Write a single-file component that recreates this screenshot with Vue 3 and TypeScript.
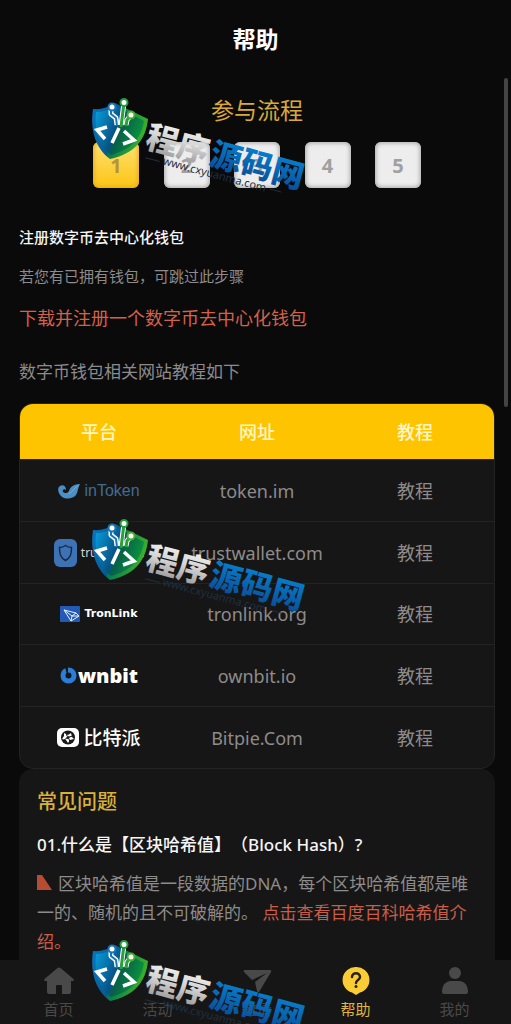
<script setup lang="ts">
import { ref } from 'vue'

interface Wallet {
  id: string
  brand: string
  site: string
}

const steps = [1, 2, 3, 4, 5]
const activeStep = ref(1)

const wallets: Wallet[] = [
  { id: 'intoken', brand: 'inToken', site: 'token.im' },
  { id: 'trust', brand: 'trust wallet', site: 'trustwallet.com' },
  { id: 'tron', brand: 'TronLink', site: 'tronlink.org' },
  { id: 'ownbit', brand: 'wnbit', site: 'ownbit.io' },
  { id: 'bitpie', brand: '比特派', site: 'Bitpie.Com' },
]

const tabs = [
  { id: 'home', label: '首页' },
  { id: 'activity', label: '活动' },
  { id: 'invite', label: '邀请' },
  { id: 'help', label: '帮助' },
  { id: 'mine', label: '我的' },
]
const activeTab = ref('help')

const marks = ['top', 'middle', 'bottom']
</script>

<template>
  <div class="page">
    <header class="header">
      <h1>帮助</h1>
    </header>

    <main class="content">
      <h2 class="flow-title">参与流程</h2>
      <div class="steps">
        <button
          v-for="n in steps"
          :key="n"
          type="button"
          class="step"
          :class="{ active: n === activeStep }"
          @click="activeStep = n"
        >{{ n }}</button>
      </div>

      <section class="intro">
        <h3>注册数字币去中心化钱包</h3>
        <p class="hint">若您有已拥有钱包，可跳过此步骤</p>
        <a class="download" href="#wallets">下载并注册一个数字币去中心化钱包</a>
        <p class="related">数字币钱包相关网站教程如下</p>
      </section>

      <div id="wallets" class="table-box">
        <table>
          <thead>
            <tr>
              <th>平台</th>
              <th>网址</th>
              <th>教程</th>
            </tr>
          </thead>
          <tbody>
            <tr v-for="w in wallets" :key="w.id">
              <td>
                <span class="brand" :class="w.id">
                  <svg v-if="w.id === 'intoken'" width="22" height="16" viewBox="0 0 22 16" aria-hidden="true">
                    <path d="M22 1C16 1 12 4 11 8c-1 2-4 3-6 1-1-2 1-4 3-2C8 3 5 1 2 3c-3 2-2 7 1 10 4 4 12 3 15-1 2-3 2-8 4-11Z" fill="#4b8fc4" />
                    <path d="M21 2c-5 3-6 6-10 9" fill="none" stroke="#77afd6" stroke-width="1" />
                  </svg>
                  <svg v-else-if="w.id === 'trust'" width="23" height="28" viewBox="0 0 23 28" aria-hidden="true">
                    <rect width="23" height="28" rx="6" fill="#3d73b4" />
                    <path d="M11.500 6.500c2 1.500 4 2 6 2 0 7-1 10-6 13-5-3-6-6-6-13 2 0 4-.5 6-2Z" fill="none" stroke="#172a47" stroke-width="1.500" />
                  </svg>
                  <svg v-else-if="w.id === 'tron'" width="20" height="16" viewBox="0 0 20 16" aria-hidden="true">
                    <rect width="20" height="16" rx="1" fill="#2459b5" />
                    <path d="m4 4 12 3 3 3-8 5L4 4Zm0 0 8 6 7 0M16 7l-4 3-1 5" fill="none" stroke="#e8f1ff" stroke-width="1" />
                  </svg>
                  <svg v-else-if="w.id === 'ownbit'" width="17" height="17" viewBox="0 0 17 17" aria-hidden="true">
                    <circle cx="8.500" cy="8.500" r="5.500" fill="none" stroke="#2a7ed8" stroke-width="5" />
                    <path d="M5 0h3v8H7Z" fill="#171616" />
                  </svg>
                  <svg v-else width="22" height="19" viewBox="0 0 22 19" aria-hidden="true">
                    <rect width="22" height="19" rx="5" fill="#fff" />
                    <circle cx="11" cy="9.500" r="7" fill="#1a1919" />
                    <path d="m7 5 4 2 3-2 1 4 2 2-4 1-2 3-2-3-4-1 2-3Z" fill="#fff" />
                    <circle cx="11" cy="9.500" r="1.500" fill="#1a1919" />
                    <path d="m9 4 1 4M16 8l-4 1M7 12l3-2M13 14l-1-3" stroke="#1a1919" />
                  </svg>
                  <span>{{ w.brand }}</span>
                </span>
              </td>
              <td>{{ w.site }}</td>
              <td><a href="#faq">教程</a></td>
            </tr>
          </tbody>
        </table>
      </div>

      <section id="faq" class="faq">
        <h2>常见问题</h2>
        <h3>01.什么是【区块哈希值】（Block Hash）?</h3>
        <p>
          <svg class="flag" width="15" height="15" viewBox="0 0 15 15" aria-hidden="true"><path d="M0 0h5l10 15H0Z" fill="#b64d32" /></svg>区块哈希值是一段数据的DNA，每个区块哈希值都是唯一的、随机的且不可破解的。
          <a href="#baike">点击查看百度百科哈希值介绍。</a>
        </p>
      </section>
    </main>

    <div class="thumb" aria-hidden="true"></div>

    <nav class="tabs">
      <button
        v-for="t in tabs"
        :key="t.id"
        type="button"
        class="tab"
        :class="{ active: t.id === activeTab }"
        @click="activeTab = t.id"
      >
        <svg width="32" height="30" viewBox="0 0 32 30" aria-hidden="true">
          <path v-if="t.id === 'home'" d="M14.500 2q1.500-1 3 0l13 11q1 2-1 2H28v11q0 2-2 2h-7v-8q0-1-1-1h-4q-1 0-1 1v8H6q-2 0-2-2V15H2.500q-2 0-1-2Z" fill="currentColor" />
          <path v-else-if="t.id === 'activity'" d="M9 2h14q3 0 3 3v20q0 3-3 3H9q-3 0-3-3V5q0-3 3-3Z" fill="#2b2a2b" />
          <path v-else-if="t.id === 'invite'" d="M4 4h25q2 0 1 2L18 26q-1 1-2-1l-2-9L26 7 11 14 3 6q-1-2 1-2Z" fill="currentColor" />
          <g v-else-if="t.id === 'help'">
            <path d="M16 1a13 13 0 0 1 4 25.500L16 29l-4-2.500A13 13 0 0 1 16 1Z" fill="#fbcd35" />
            <path d="M12 11c0-5 8-5 8 0 0 3-4 3-4 6" fill="none" stroke="#292211" stroke-width="2.500" stroke-linecap="round" />
            <circle cx="16" cy="20.500" r="1.500" fill="#292211" />
          </g>
          <g v-else fill="currentColor">
            <circle cx="16" cy="7" r="6" />
            <path d="M12 15h8c6 0 9 5 9 11q0 2-2 2H5q-2 0-2-2c0-6 3-11 9-11Z" />
          </g>
        </svg>
        <span>{{ t.label }}</span>
      </button>
    </nav>

    <svg v-for="m in marks" :key="m" class="mark" :class="m" width="220" height="102" viewBox="0 0 220 102" aria-hidden="true">
      <defs>
        <linearGradient :id="`shield-${m}`" x1="0" y1="0" x2="1" y2="0.300">
          <stop offset="0" stop-color="#0878c4" />
          <stop offset="0.480" stop-color="#075a8d" />
          <stop offset="0.520" stop-color="#067a50" />
          <stop offset="1" stop-color="#3aae2c" />
        </linearGradient>
        <linearGradient :id="`inner-${m}`" x1="0" y1="0.200" x2="1" y2="0.600">
          <stop offset="0" stop-color="#0798d5" />
          <stop offset="0.450" stop-color="#075386" />
          <stop offset="0.550" stop-color="#076048" />
          <stop offset="1" stop-color="#0b9a3c" />
        </linearGradient>
        <linearGradient :id="`silver-${m}`" x1="0" y1="0" x2="0" y2="1">
          <stop offset="0" stop-color="#ffffff" />
          <stop offset="0.500" stop-color="#d4d4d4" />
          <stop offset="1" stop-color="#8f8f8f" />
        </linearGradient>
        <linearGradient :id="`blue-${m}`" x1="0" y1="0" x2="0" y2="1">
          <stop offset="0" stop-color="#078bdc" />
          <stop offset="1" stop-color="#09488f" />
        </linearGradient>
      </defs>
      <path d="M2 11q12 1 22-6l33 16C55 42 43 56 19 61 4 50-1 31 2 11Z" :fill="`url(#shield-${m})`" />
      <path d="M5 14q10 0 19-6l29 15C50 41 40 52 20 57 7 47 3 31 5 14Z" :fill="`url(#inner-${m})`" />
      <path d="M26 27l-1-7-5-4V9M30 27l3-22M35 27l1-5 4-5" fill="none" stroke="#fff" stroke-width="5" stroke-linejoin="round" />
      <path d="m26 28-1-8-5-4V9" fill="none" stroke="#1774b8" stroke-width="2" />
      <path d="m30 29 3-24M35 28l1-6 4-5" fill="none" stroke="#28a13b" stroke-width="3" />
      <circle cx="21" cy="9" r="3.500" fill="#fff" stroke="#1774b8" stroke-width="2" />
      <circle cx="33" cy="4.500" r="3.500" fill="#fff" stroke="#229a3f" stroke-width="2" />
      <circle cx="40" cy="17" r="3.500" fill="#fff" stroke="#45ae31" stroke-width="2" />
      <path d="M16 29 6 32l8 9M28 30l-7 15M33 33l10 9-11 4" fill="none" stroke="#fff" stroke-width="3.500" />
      <g transform="translate(53 49) rotate(15)">
        <text class="mark-name" x="0" y="0" :fill="`url(#silver-${m})`">程序</text>
        <text class="mark-name" x="66" y="0" :fill="`url(#blue-${m})`">源码网</text>
        <text class="mark-url" x="22" y="12">www.cxyuanma.com</text>
        <path d="M4 10h15M132 8h12" stroke="#1d3040" />
      </g>
    </svg>
  </div>
</template>

<style>
body {
  margin: 0;
  background: #0b0a0b;
}
</style>

<style scoped>
.page {
  position: relative;
  display: flex;
  flex-direction: column;
  height: 100vh;
  overflow: hidden;
  background: #0b0a0b;
  color: #8d8b8b;
  font-family: "Noto Sans", "Noto Sans CJK SC", sans-serif;
  text-spacing-trim: space-all;
}

h1,
h2,
h3,
p {
  margin: 0;
}

button {
  padding: 0;
  border: 0;
  font-family: inherit;
  cursor: pointer;
}

a {
  color: inherit;
  text-decoration: none;
}

.header {
  display: flex;
  flex: none;
  align-items: center;
  justify-content: center;
  height: 78px;
}

.header h1 {
  color: #fff;
  font-size: 23px;
  line-height: 32px;
}

.content {
  flex: 1;
  min-height: 0;
  padding: 16px 16px 0 19px;
  overflow-y: auto;
  scrollbar-width: none;
}

.flow-title {
  color: #d9aa35;
  font-size: 23px;
  font-weight: 400;
  line-height: 32px;
  text-align: center;
}

.steps {
  display: flex;
  justify-content: space-between;
  width: 328px;
  margin: 16px auto 0;
}

.step {
  width: 46px;
  height: 46px;
  border-radius: 6px;
  background: #ededed;
  box-shadow: inset 0 0 4px 1px #a5a5a5;
  color: #a0a0a0;
  font-size: 20px;
  font-weight: 700;
}

.step.active {
  background: linear-gradient(#ffe071, #fcc514);
  box-shadow: inset 0 0 4px 1px #e2a919;
  color: #b5943e;
}

.intro {
  display: flex;
  flex-direction: column;
  align-items: flex-start;
  margin-top: 36px;
}

.intro h3 {
  color: #f5f5f5;
  font-size: 15px;
  font-weight: 500;
  line-height: 26px;
}

.hint {
  margin-top: 13px;
  font-size: 15px;
  line-height: 26px;
}

.download {
  margin-top: 16px;
  color: #d4614a;
  font-size: 18px;
  line-height: 26px;
}

.related {
  margin-top: 28px;
  font-size: 17px;
  line-height: 26px;
}

.table-box {
  margin-top: 18px;
  overflow: hidden;
  border: 1px solid #242323;
  border-radius: 14px;
  background: #171616;
}

table {
  width: 100%;
  border-spacing: 0;
  table-layout: fixed;
  font-size: 18px;
  line-height: 26px;
  text-align: center;
}

th {
  height: 55px;
  padding: 0;
  background: #ffc400;
  color: #fff6c9;
  font-weight: 500;
}

td {
  box-sizing: border-box;
  height: 62px;
  padding: 0;
  border-top: 1px solid #242323;
}

tbody tr:nth-child(3) td {
  height: 61px;
}

.brand {
  display: flex;
  align-items: center;
  justify-content: center;
  gap: 4px;
  color: #fff;
  font-family: "Noto Sans", "Noto Sans CJK SC", sans-serif;
  white-space: nowrap;
}

.brand.intoken {
  color: #416c91;
  font-family: "Liberation Sans", sans-serif;
  font-size: 16px;
}

.brand.trust {
  color: #d5d5d5;
  font-size: 12px;
}

.brand.tron {
  font-family: "DejaVu Sans", sans-serif;
  font-size: 11px;
  font-weight: 700;
}

.brand.ownbit {
  gap: 1px;
  font-size: 20px;
  font-weight: 900;
}

.brand.bitpie {
  font-size: 19px;
  font-weight: 500;
}

.faq {
  min-height: 480px;
  padding: 18px;
  border-radius: 14px;
  background: #171616;
}

.faq h2 {
  color: #d9b23a;
  font-size: 20px;
  font-weight: 500;
  line-height: 30px;
}

.faq h3 {
  margin-top: 14px;
  color: #f5f5f5;
  font-size: 17px;
  font-weight: 500;
  line-height: 28px;
}

.faq p {
  margin-top: 10px;
  font-size: 17px;
  line-height: 29px;
}

.faq p a {
  color: #c95d48;
}

.flag {
  margin-right: 6px;
}

.thumb {
  position: absolute;
  top: 78px;
  right: 3px;
  width: 4px;
  height: 329px;
  border-radius: 2px;
  background: #454445;
}

.tabs {
  display: flex;
  flex: none;
  height: 64px;
  padding: 0 7px 0 9px;
  background: #171616;
}

.tab {
  display: flex;
  flex: 1;
  flex-direction: column;
  align-items: center;
  padding-top: 6px;
  background: none;
  color: #4a494a;
  font-size: 15px;
  line-height: 26px;
}

.tab.active {
  color: #dfb73d;
}

.mark {
  position: absolute;
  left: 91px;
  overflow: visible;
  pointer-events: none;
}

.mark.top {
  top: 98px;
}

.mark.middle {
  top: 519px;
}

.mark.bottom {
  top: 940px;
}

.mark-name {
  font-family: "Noto Sans CJK SC", sans-serif;
  font-size: 32px;
  font-weight: 900;
}

.mark-url {
  fill: #1d3040;
  font-family: "Noto Sans", sans-serif;
  font-size: 11px;
}
</style>
